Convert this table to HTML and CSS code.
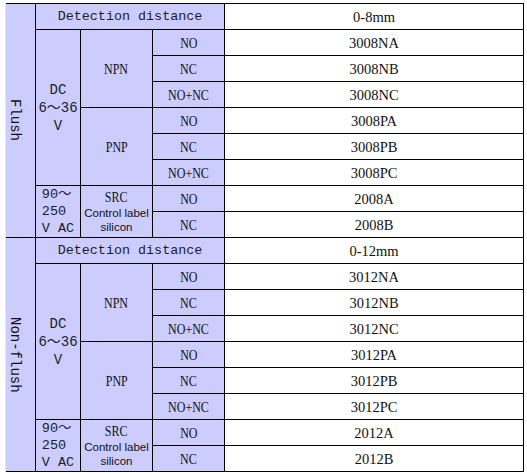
FILE: index.html
```html
<!DOCTYPE html>
<html>
<head>
<meta charset="utf-8">
<link rel="stylesheet" href="styles.css">
</head>
<body>
<div class="spec">
  <div class="cell group"><span>Flush</span></div>
  <div class="cell mono detect">Detection distance</div>
  <div class="cell val">0-8mm</div>
  <div class="cell mono dc">DC<br>6～36<br>V</div>
  <div class="cell lab out"><span class="n">NPN</span></div>
  <div class="cell lab"><span class="n">NO</span></div>
  <div class="cell val">3008NA</div>
  <div class="cell lab"><span class="n">NC</span></div>
  <div class="cell val">3008NB</div>
  <div class="cell lab"><span class="n">NO+NC</span></div>
  <div class="cell val">3008NC</div>
  <div class="cell lab out"><span class="n">PNP</span></div>
  <div class="cell lab"><span class="n">NO</span></div>
  <div class="cell val">3008PA</div>
  <div class="cell lab"><span class="n">NC</span></div>
  <div class="cell val">3008PB</div>
  <div class="cell lab"><span class="n">NO+NC</span></div>
  <div class="cell val">3008PC</div>
  <div class="cell mono ac"><div class="ac-text">90～<br>250<br>V AC</div></div>
  <div class="cell src"><div><span class="n src-name">SRC</span><br><span class="src-note">Control label<br>silicon</span></div></div>
  <div class="cell lab"><span class="n">NO</span></div>
  <div class="cell val">2008A</div>
  <div class="cell lab"><span class="n">NC</span></div>
  <div class="cell val">2008B</div>

  <div class="cell group"><span>Non-flush</span></div>
  <div class="cell mono detect">Detection distance</div>
  <div class="cell val">0-12mm</div>
  <div class="cell mono dc">DC<br>6～36<br>V</div>
  <div class="cell lab out"><span class="n">NPN</span></div>
  <div class="cell lab"><span class="n">NO</span></div>
  <div class="cell val">3012NA</div>
  <div class="cell lab"><span class="n">NC</span></div>
  <div class="cell val">3012NB</div>
  <div class="cell lab"><span class="n">NO+NC</span></div>
  <div class="cell val">3012NC</div>
  <div class="cell lab out"><span class="n">PNP</span></div>
  <div class="cell lab"><span class="n">NO</span></div>
  <div class="cell val">3012PA</div>
  <div class="cell lab"><span class="n">NC</span></div>
  <div class="cell val">3012PB</div>
  <div class="cell lab"><span class="n">NO+NC</span></div>
  <div class="cell val">3012PC</div>
  <div class="cell mono ac"><div class="ac-text">90～<br>250<br>V AC</div></div>
  <div class="cell src"><div><span class="n src-name">SRC</span><br><span class="src-note">Control label<br>silicon</span></div></div>
  <div class="cell lab"><span class="n">NO</span></div>
  <div class="cell val">2012A</div>
  <div class="cell lab"><span class="n">NC</span></div>
  <div class="cell val">2012B</div>
</div>
</body>
</html>
```

FILE: styles.css
```css
html, body {
  margin: 0;
  background: #ffffff;
}
body {
  padding: 3px 0 0 5px;
  color: #111;
  font-family: "Liberation Serif", "Noto Sans CJK SC", serif;
}
.spec {
  display: grid;
  grid-template-columns: 29px 44px 71px 71px 298px;
  grid-template-rows: repeat(18, 25px);
  gap: 1px;
  width: max-content;
  padding: 1px 1px 1px 0;
  border-left: 1px solid #e4e4f4;
  background: #000;
}
.cell {
  display: flex;
  align-items: center;
  justify-content: center;
  text-align: center;
  background: #ccccff;
  overflow: hidden;
  font-size: 14px;
  line-height: 16px;
  white-space: nowrap;
}
.group {
  grid-row: span 9;
  padding-right: 11px;
  font-family: "Liberation Mono", monospace;
  font-size: 14px;
}
.group span {
  writing-mode: vertical-rl;
}
.mono {
  font-family: "Liberation Mono", "Noto Sans CJK SC", monospace;
  color: #1c1c2c;
}
.detect {
  grid-column: span 3;
  font-size: 13.4px;
}
.dc {
  grid-row: span 6;
  line-height: 18px;
  font-size: 14px;
}
.out {
  grid-row: span 3;
}
.lab {
  font-size: 15px;
}
.n {
  display: inline-block;
  transform: scaleX(0.8);
}
.val {
  background: #ffffff;
  font-size: 14.5px;
}
.ac {
  grid-row: span 2;
  font-size: 13.5px;
  line-height: 17px;
}
.ac-text {
  text-align: left;
}
.src {
  grid-row: span 2;
  line-height: 14px;
}
.src-name {
  font-size: 15px;
  line-height: 17px;
}
.src-note {
  font-family: "Liberation Sans", sans-serif;
  font-size: 11.5px;
}
```
